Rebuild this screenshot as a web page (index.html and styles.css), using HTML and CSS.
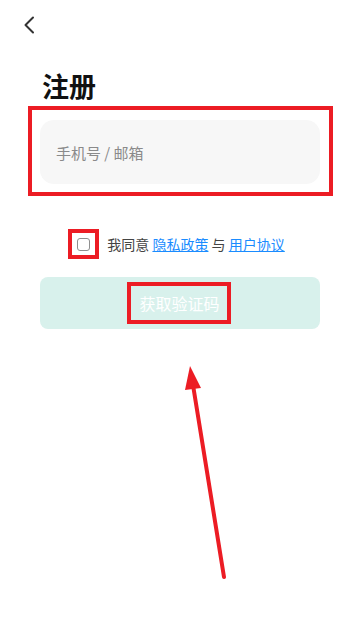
FILE: index.html
```html
<!DOCTYPE html>
<html>
<head>
	<meta charset="utf-8">
	<title>注册</title>
	<link rel="stylesheet" href="styles.css">
</head>
<body>
	<div class="page">
		<div class="topbar">
			<svg class="back" width="12" height="18" viewBox="0 0 12 18">
				<path d="M10 1.5 L2.5 9 L10 16.5" fill="none" stroke="#333" stroke-width="2" stroke-linecap="round" stroke-linejoin="round"/>
			</svg>
		</div>
		<h1 class="title">注册</h1>
		<div class="field-wrap">
			<input class="field" type="text" placeholder="手机号 / 邮箱">
			<span class="mark mark-field"></span>
		</div>
		<div class="agree">
			<label class="check-wrap">
				<input class="check" type="checkbox">
				<span class="mark mark-check"></span>
			</label>
			<span class="agree-text">我同意 <a href="#">隐私政策</a> 与 <a href="#">用户协议</a></span>
		</div>
		<button class="submit" type="button">
			<span class="submit-label">获取验证码<span class="mark mark-btn"></span></span>
		</button>
	</div>
	<svg class="arrow" width="360" height="619" viewBox="0 0 360 619">
		<line x1="224" y1="577" x2="193" y2="385" stroke="#ec1c24" stroke-width="4" stroke-linecap="round"/>
		<polygon points="190,366 185,390 201,388" fill="#ec1c24"/>
	</svg>
</body>
</html>
```

FILE: styles.css
```css
body {
	margin: 0;
	background: #fff;
	font-family: "Noto Sans CJK SC", "Noto Sans", sans-serif;
	color: #222;
}

.page {
	padding: 0 40px;
}

.topbar {
	height: 50px;
	display: flex;
	align-items: center;
	margin-left: -17px;
}

.back {
	display: block;
	margin-top: -1px;
}

.title {
	margin: 17px 0 0 2px;
	font-size: 27px;
	line-height: 38px;
	font-weight: bold;
	color: #111;
}

.field-wrap {
	position: relative;
	margin-top: 15px;
}

.field {
	display: block;
	box-sizing: border-box;
	width: 100%;
	height: 64px;
	padding: 0 16px;
	border: none;
	border-radius: 14px;
	background: #f7f7f7;
	font-family: inherit;
	font-size: 15px;
	color: #222;
	outline: none;
}

.field::placeholder {
	color: #8a8a8a;
}

.mark {
	position: absolute;
	border: 4px solid #ec1c24;
	box-sizing: border-box;
	pointer-events: none;
}

.mark-field {
	left: -12px;
	right: -13px;
	top: -14px;
	bottom: -12px;
}

.agree {
	display: flex;
	justify-content: center;
	align-items: center;
	margin-top: 45px;
	height: 30px;
	font-size: 14px;
	color: #444;
}

.check-wrap {
	position: relative;
	display: flex;
	margin-right: 17px;
	margin-left: 2px;
}

.check {
	-webkit-appearance: none;
	appearance: none;
	width: 13px;
	height: 13px;
	margin: 0;
	border: 1px solid #8f8f8f;
	border-radius: 3px;
	background: #fff;
}

.mark-check {
	left: -9px;
	right: -9px;
	top: -9px;
	bottom: -8px;
}

.agree-text a {
	color: #1a8cff;
	text-decoration: underline;
}

.submit {
	display: flex;
	justify-content: center;
	align-items: center;
	width: 100%;
	height: 52px;
	margin-top: 18px;
	border: none;
	border-radius: 8px;
	background: #d8f1ec;
	font-family: inherit;
	font-size: 16px;
	color: #fff;
}

.submit-label {
	position: relative;
	margin-left: -1px;
}

.mark-btn {
	left: -12px;
	right: -11px;
	top: -9px;
	bottom: -9px;
}

.arrow {
	position: absolute;
	left: 0;
	top: 0;
	pointer-events: none;
}
```
